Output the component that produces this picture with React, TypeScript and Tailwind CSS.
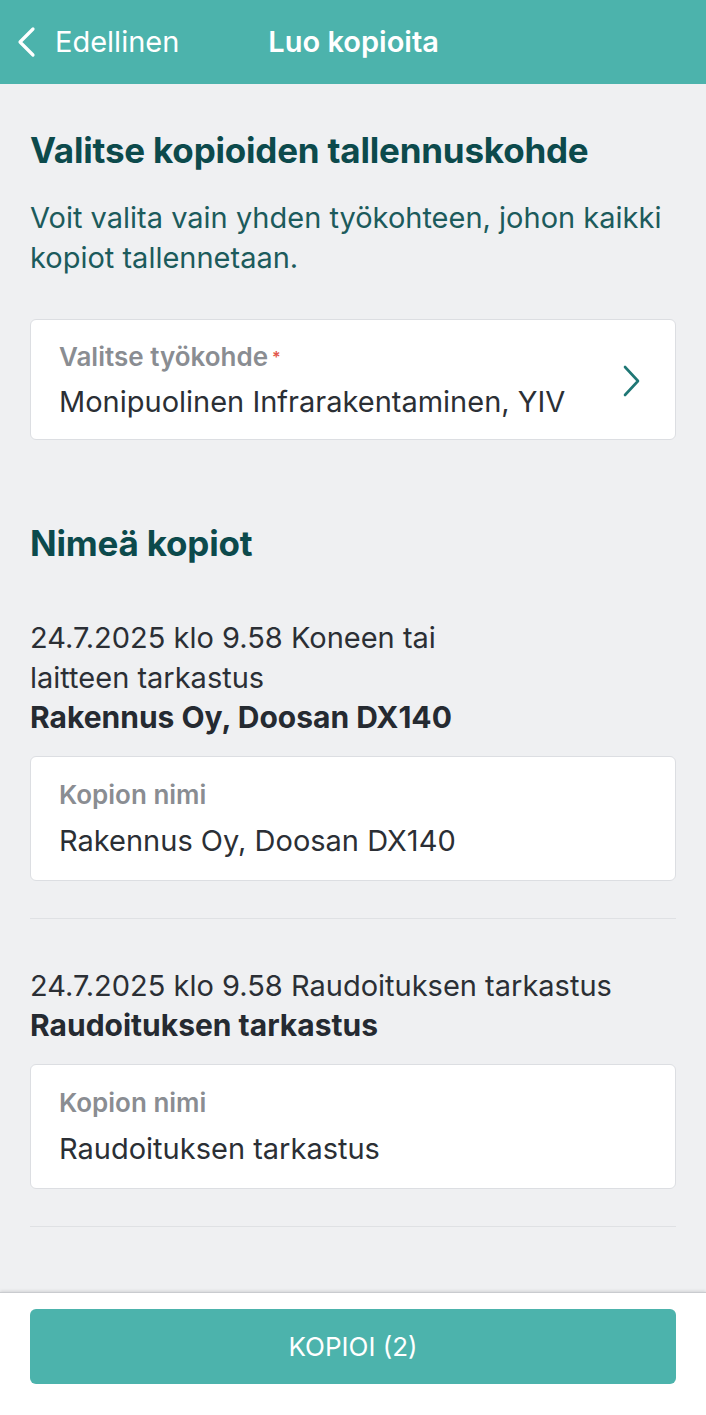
type CopyItem = {
  source: string[];
  title: string;
  name: string;
};

const items: CopyItem[] = [
  {
    source: ['24.7.2025 klo 9.58 Koneen tai', 'laitteen tarkastus'],
    title: 'Rakennus Oy, Doosan DX140',
    name: 'Rakennus Oy, Doosan DX140',
  },
  {
    source: ['24.7.2025 klo 9.58 Raudoituksen tarkastus'],
    title: 'Raudoituksen tarkastus',
    name: 'Raudoituksen tarkastus',
  },
];

function CopyRow({ item }: { item: CopyItem }) {
  return (
    <div className="border-b border-[#dfe1e4] pb-[37px] pt-[47px]">
      {item.source.map((line) => (
        <p key={line} className="text-[29px] leading-[40px] text-[#2b2f35]">
          {line}
        </p>
      ))}
      <p className="text-[30px] font-bold leading-[38px] text-[#252a31]">{item.title}</p>
      <div className="mt-[20px] rounded-md border border-[#dcdee2] bg-white px-[28px] pb-[21px] pt-[22px]">
        <div className="text-[26px] font-semibold leading-[32px] text-[#8a8d92]">Kopion nimi</div>
        <div className="mt-[12px] text-[29px] leading-[36px] text-[#2b2f35]">{item.name}</div>
      </div>
    </div>
  );
}

export default function App() {
  return (
    <div
      className="flex h-[1415px] w-[706px] flex-col bg-[#eff0f2]"
      style={{ fontFamily: 'Inter, "Liberation Sans", sans-serif' }}
    >
      <header className="flex h-[84px] shrink-0 items-center bg-[#4cb3ac] text-white">
        <button className="ml-[16px] flex items-center">
          <svg width="22" height="32" viewBox="0 0 22 32" fill="none">
            <polyline
              points="17,3 4,16 17,29"
              stroke="currentColor"
              strokeWidth="3.2"
              strokeLinecap="round"
              strokeLinejoin="round"
            />
          </svg>
          <span className="ml-[17px] text-[29px]">Edellinen</span>
        </button>
        <h1 className="ml-[89px] text-[29px] font-semibold">Luo kopioita</h1>
      </header>

      <main className="flex-1 overflow-hidden px-[30px]">
        <h2 className="mt-[44px] text-[35px] font-bold leading-[44px] tracking-[-0.2px] text-[#0c4a4c]">
          Valitse kopioiden tallennuskohde
        </h2>
        <p className="mt-[26px] text-[29px] leading-[40px] text-[#1c5b5c]">
          Voit valita vain yhden työkohteen, johon kaikki kopiot tallennetaan.
        </p>

        <button className="mt-[41px] flex w-full items-center rounded-md border border-[#dcdee2] bg-white pb-[19px] pl-[28px] pr-[34px] pt-[21px] text-left">
          <div className="flex-1">
            <div className="text-[26px] font-semibold leading-[32px] text-[#8a8d92]">
              Valitse työkohde<span className="ml-[4px] align-top text-[16px] text-[#e2574c]">*</span>
            </div>
            <div className="mt-[11px] text-[29px] leading-[36px] text-[#2b2f35]">
              Monipuolinen Infrarakentaminen, YIV
            </div>
          </div>
          <svg width="20" height="34" viewBox="0 0 20 34" fill="none" className="text-[#1f7775]">
            <polyline
              points="4,3 17,17 4,31"
              stroke="currentColor"
              strokeWidth="2.6"
              strokeLinecap="round"
              strokeLinejoin="round"
            />
          </svg>
        </button>

        <h2 className="mt-[81px] text-[35px] font-bold leading-[44px] tracking-[-0.2px] text-[#0c4a4c]">
          Nimeä kopiot
        </h2>

        <div className="mt-[6px]">
          {items.map((item) => (
            <CopyRow key={item.title} item={item} />
          ))}
        </div>
      </main>

      <footer className="shrink-0 border-t border-[#c9cbcf] bg-white px-[30px] pb-[31px] pt-[16px] shadow-[0_-1px_3px_rgba(0,0,0,0.12)]">
        <button className="flex h-[75px] w-full items-center justify-center rounded-md bg-[#4cb3ac] text-[26px] text-white">
          KOPIOI (2)
        </button>
      </footer>
    </div>
  );
}
